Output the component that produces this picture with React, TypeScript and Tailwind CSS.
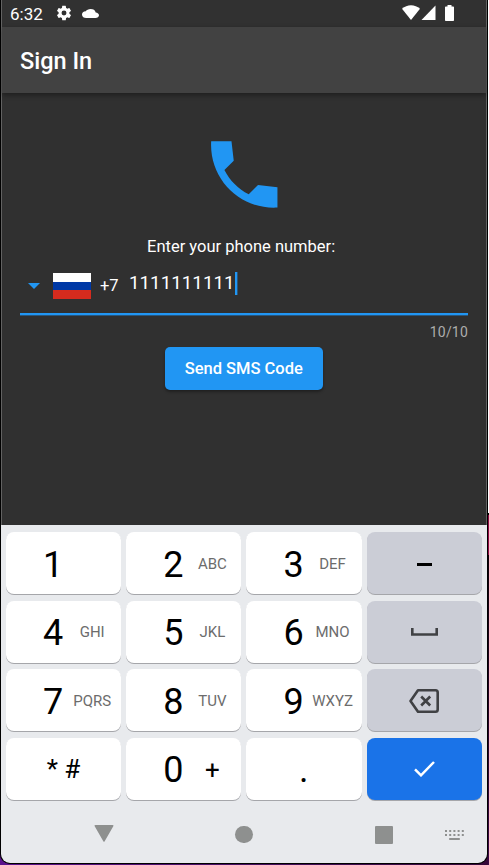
import React from "react";

function StatusBar() {
  return (
    <div className="flex h-[27px] shrink-0 items-center bg-[#313131] pr-[32px] pl-[9px] text-white">
      <span className="-ml-px w-[44px] whitespace-nowrap text-[17px] leading-[26px]">6:32</span>
      <svg className="-mt-px ml-[1px] h-[18px] w-[18px] shrink-0" viewBox="0 0 24 24" fill="currentColor">
        <path d="M19.14 12.94c.04-.3.06-.61.06-.94 0-.32-.02-.64-.07-.94l2.03-1.58a.49.49 0 0 0 .12-.61l-1.92-3.32a.488.488 0 0 0-.59-.22l-2.39.96c-.5-.38-1.03-.7-1.62-.94l-.36-2.54a.484.484 0 0 0-.48-.41h-3.84c-.24 0-.43.17-.47.41l-.36 2.54c-.59.24-1.13.57-1.62.94l-2.39-.96c-.22-.08-.47 0-.59.22L2.74 8.87c-.12.21-.08.47.12.61l2.03 1.58c-.05.3-.09.63-.09.94s.02.64.07.94l-2.03 1.58a.49.49 0 0 0-.12.61l1.92 3.32c.12.22.37.29.59.22l2.39-.96c.5.38 1.03.7 1.62.94l.36 2.54c.05.24.24.41.48.41h3.84c.24 0 .44-.17.47-.41l.36-2.54c.59-.24 1.13-.56 1.62-.94l2.39.96c.22.08.47 0 .59-.22l1.92-3.32c.12-.22.07-.47-.12-.61zM12 15.3a3.3 3.3 0 1 1 0-6.6 3.3 3.3 0 0 1 0 6.6z" />
      </svg>
      <svg className="-mt-px ml-[9px] h-[9px] w-[17px] shrink-0" viewBox="0 0 24 16" preserveAspectRatio="none" fill="currentColor">
        <path d="M19.35 6.04A7.49 7.49 0 0 0 12 0C9.11 0 6.6 1.64 5.35 4.04A5.994 5.994 0 0 0 0 10c0 3.31 2.69 6 6 6h13c2.76 0 5-2.24 5-5 0-2.64-2.05-4.78-4.65-4.96z" />
      </svg>
      <div className="grow" />
      <svg className="-mt-[2px] h-[15px] w-[18px]" viewBox="0 0 18 15" fill="currentColor">
        <path d="M9 15 0 3.8C5-1.1 13-1.1 18 3.8z" />
      </svg>
      <svg className="-mt-[2px] ml-[1px] h-[15px] w-[15px]" viewBox="0 0 14 15" fill="currentColor">
        <path d="M14 .5V15H0z" />
      </svg>
      <svg className="-mt-px ml-[9px] h-[16px] w-[9px]" viewBox="0 0 9 16" fill="currentColor">
        <path d="M2.5 0h4v1.5h1.7q.8 0 .8.8v12.9q0 .8-.8.8H.8q-.8 0-.8-.8V2.3q0-.8.8-.8h1.7z" />
      </svg>
    </div>
  );
}

function SignInForm() {
  return (
    <div className="flex h-[431px] shrink-0 flex-col pt-[36px] pr-[19px] pl-[19px] text-white">
      <svg className="ml-[180px] h-[89px] w-[88.5px] shrink-0 text-[#2196f3]" viewBox="0 0 24 24" fill="currentColor">
        <path d="M21 15.46l-5.27-.61-2.52 2.52c-2.83-1.44-5.15-3.75-6.59-6.59l2.53-2.53L8.54 3H3.03C2.45 13.18 10.82 21.55 21 20.97v-5.51z" />
      </svg>
      <div className="mt-[17px] pl-[127px] text-[16.5px] leading-[22px] whitespace-nowrap">
        Enter your phone number:
      </div>
      <div className="flex h-[57px] border-b-2 border-[#2196f3] shadow-[0_1px_0_#28567c]">
        <svg className="mt-[25px] ml-[8px] h-[6px] w-[12px] shrink-0 text-[#2196f3]" viewBox="0 0 12 6" fill="currentColor">
          <path d="M0 0h12L6 6z" />
        </svg>
        <div className="mt-[15px] ml-[13px] flex h-[26px] w-[38px] shrink-0 flex-col">
          <div className="grow basis-0 bg-white" />
          <div className="grow basis-0 bg-[#0039a6]" />
          <div className="grow basis-0 bg-[#d52b1e]" />
        </div>
        <span className="mt-[17px] ml-[9px] w-[29px] shrink-0 text-[16.5px] leading-[22px]">+7</span>
        <span className="mt-[13px] text-[18.8px] leading-[24px]">1111111111</span>
        <div className="mt-[14px] h-[23px] w-[2px] bg-[#2196f3] shadow-[1px_0_0_#28567c]" />
      </div>
      <div className="mt-[8px] text-right text-[14px] leading-[18px] tracking-[0.2px] text-[#adadad]">10/10</div>
      <button className="mt-[6px] ml-[145px] h-[43px] w-[157.5px] shrink-0 rounded-[5px] bg-[#2196f3] pt-px text-[16.5px] font-medium whitespace-nowrap shadow-[0_2px_3px_rgba(0,0,0,0.35)]">
        Send SMS Code
      </button>
    </div>
  );
}

const keyBase =
  "flex h-[62px] items-center rounded-[8px] shadow-[0_1px_0.5px_#a5a6aa]";

function NumberKey({ digit, label }: { digit: string; label?: string }) {
  return (
    <div className={`${keyBase} bg-white pl-[32.2px]`}>
      <span className="flex w-[30px] justify-center pt-[3px] text-[36px] leading-[42px] text-black">{digit}</span>
      <span
        className={
          label === "+"
            ? "w-[48px] pt-[2px] text-center text-[26px] leading-[30px] text-black"
            : "w-[48px] pt-[2px] text-center text-[15px] text-[#6c6c6c]"
        }
      >
        {label}
      </span>
    </div>
  );
}

function Keyboard() {
  return (
    <div className="grid shrink-0 grid-cols-[115px_115px_115.5px_115px] gap-x-[5.2px] gap-y-[6.5px] pt-[7px] pl-[5px]">
      <NumberKey digit="1" />
      <NumberKey digit="2" label="ABC" />
      <NumberKey digit="3" label="DEF" />
      <div className={`${keyBase} justify-center bg-[#cbcdd6]`}>
        <div className="mt-[2px] h-[3px] w-[15px] bg-black" />
      </div>
      <NumberKey digit="4" label="GHI" />
      <NumberKey digit="5" label="JKL" />
      <NumberKey digit="6" label="MNO" />
      <div className={`${keyBase} justify-center bg-[#cbcdd6]`}>
        <svg className="h-[8px] w-[27px]" viewBox="0 0 27 8" fill="none" stroke="#404144" strokeWidth="2.6">
          <path d="M1.3 0v6.5h24.4V0" />
        </svg>
      </div>
      <NumberKey digit="7" label="PQRS" />
      <NumberKey digit="8" label="TUV" />
      <NumberKey digit="9" label="WXYZ" />
      <div className={`${keyBase} justify-center bg-[#cbcdd6] pr-px`}>
        <svg className="mt-[2px] h-[24px] w-[30px]" viewBox="0 0 30 24" fill="none" stroke="#404144" strokeWidth="2.6">
          <path d="M9 1.3h17.5q2.2 0 2.2 2.2v17q0 2.2-2.2 2.2H9L1.5 12z" strokeLinejoin="round" />
          <path d="m12.2 7.5 9 9m0-9-9 9" />
        </svg>
      </div>
      <div className={`${keyBase} justify-center bg-white pt-[2px] text-[26px] text-black`}>* #</div>
      <NumberKey digit="0" label="+" />
      <div className={`${keyBase} justify-center bg-white pr-px pt-[3px] text-[36px] text-black`}>.</div>
      <div className={`${keyBase} justify-center bg-[#1a73e8]`}>
        <svg className="h-[17px] w-[21px]" viewBox="0 0 21 17" fill="none" stroke="white" strokeWidth="2.5">
          <path d="m1 9.3 6 6L20 2" />
        </svg>
      </div>
    </div>
  );
}

function NavigationBar() {
  return (
    <div className="flex grow pl-[92.5px] text-[#8e908f]">
      <svg className="mt-[25px] h-[17px] w-[20px]" viewBox="0 0 20 17" fill="currentColor">
        <path d="M1.5 0h17q1.5 0 .8 1.2L10.7 16.2q-.7 1.2-1.4 0L.7 1.2Q0 0 1.5 0z" />
      </svg>
      <div className="mt-[26px] ml-[121.5px] h-[17px] w-[17.5px] rounded-full bg-[#8e908f]" />
      <div className="mt-[26px] ml-[122.5px] h-[18px] w-[18px] rounded-[1px] bg-[#8e908f]" />
      <svg className="mt-[30px] ml-[52px] h-[10px] w-[19px]" viewBox="0 0 19 10" fill="currentColor">
        {[0, 4.2, 8.4, 12.6, 16.8].map((x) => (
          <React.Fragment key={x}>
            <rect x={x} y="0" width="2" height="2" />
            <rect x={x} y="4" width="2" height="2" />
          </React.Fragment>
        ))}
        <rect x="4.2" y="8" width="10.6" height="2" />
      </svg>
    </div>
  );
}

export default function App() {
  return (
    <div className="relative flex h-[865px] w-[489px] overflow-hidden bg-linear-to-r from-[#5b128c] to-[#350838] font-['Roboto',sans-serif]">
      <div className="flex h-[864px] w-[488px] flex-col rounded-b-[10px] border-r border-b border-black bg-black">
        <div className="ml-[1px] flex h-[863px] w-[486px] flex-col overflow-hidden rounded-b-[9px] bg-[#e8eaed]">
          <div className="flex h-[525px] shrink-0 flex-col border-x border-[#626262] bg-[#303030]">
            <StatusBar />
            <header className="z-10 flex h-[66px] shrink-0 items-center bg-[#424242] pt-[4px] pl-[18px] text-[23.5px] font-medium text-white shadow-[0_2px_5px_rgba(0,0,0,0.4)]">
              Sign In
            </header>
            <div className="-mx-[1px] pt-px">
              <SignInForm />
            </div>
          </div>
          <Keyboard />
          <NavigationBar />
        </div>
      </div>
      <div className="flex w-[1px] flex-col">
        <div className="h-[513px] bg-white" />
        <div className="h-[2px] bg-black" />
        <div className="h-[40px] bg-[#8d0c43]" />
        <div className="grow bg-linear-to-b from-[#100008] to-[#3d0944]" />
      </div>
    </div>
  );
}
